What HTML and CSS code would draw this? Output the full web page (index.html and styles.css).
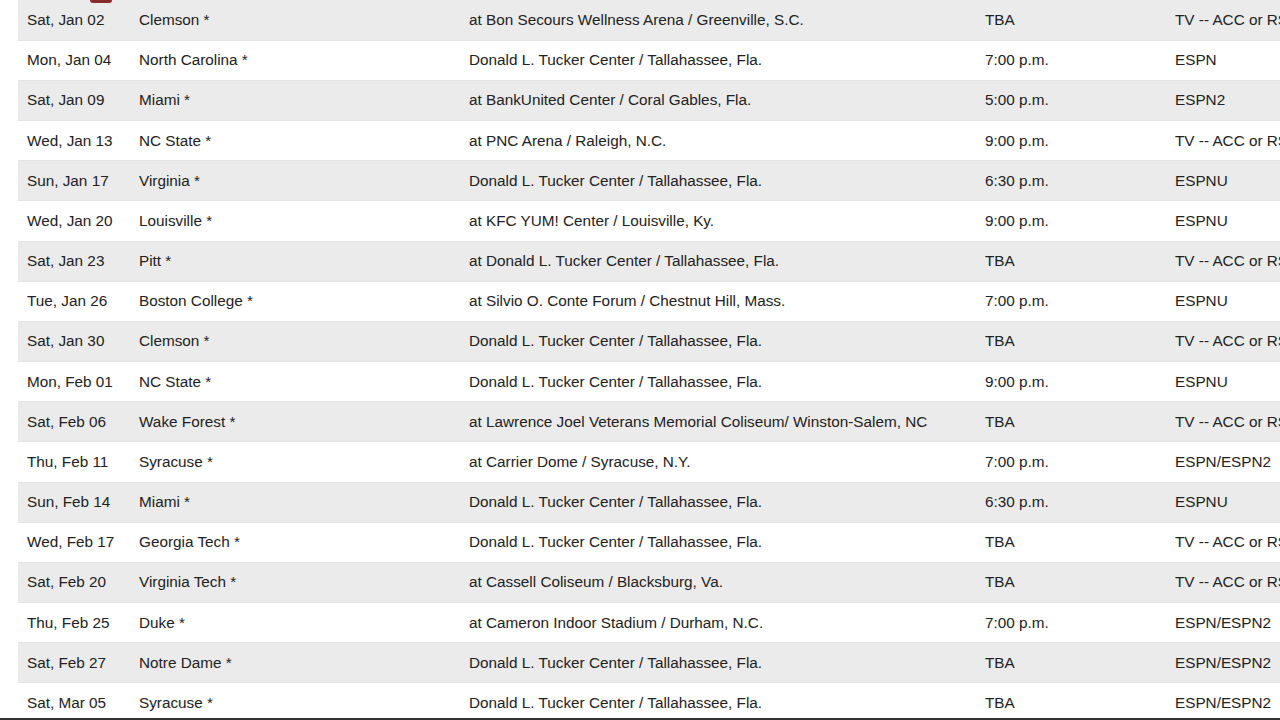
FILE: index.html
```html
<!DOCTYPE html>
<html>
<head>
<meta charset="utf-8">
<link rel="stylesheet" href="styles.css">
</head>
<body>
<div class="page">
  <div class="logo-tip"></div>
  <table class="schedule">
    <colgroup>
      <col class="c-date"><col class="c-opp"><col class="c-loc"><col class="c-time"><col class="c-tv">
    </colgroup>
    <tbody>
      <tr><td>Sat, Jan 02</td><td>Clemson *</td><td>at Bon Secours Wellness Arena / Greenville, S.C.</td><td>TBA</td><td>TV -- ACC or RSN</td></tr>
      <tr><td>Mon, Jan 04</td><td>North Carolina *</td><td>Donald L. Tucker Center / Tallahassee, Fla.</td><td>7:00 p.m.</td><td>ESPN</td></tr>
      <tr><td>Sat, Jan 09</td><td>Miami *</td><td>at BankUnited Center / Coral Gables, Fla.</td><td>5:00 p.m.</td><td>ESPN2</td></tr>
      <tr><td>Wed, Jan 13</td><td>NC State *</td><td>at PNC Arena / Raleigh, N.C.</td><td>9:00 p.m.</td><td>TV -- ACC or RSN</td></tr>
      <tr><td>Sun, Jan 17</td><td>Virginia *</td><td>Donald L. Tucker Center / Tallahassee, Fla.</td><td>6:30 p.m.</td><td>ESPNU</td></tr>
      <tr><td>Wed, Jan 20</td><td>Louisville *</td><td>at KFC YUM! Center / Louisville, Ky.</td><td>9:00 p.m.</td><td>ESPNU</td></tr>
      <tr><td>Sat, Jan 23</td><td>Pitt *</td><td>at Donald L. Tucker Center / Tallahassee, Fla.</td><td>TBA</td><td>TV -- ACC or RSN</td></tr>
      <tr><td>Tue, Jan 26</td><td>Boston College *</td><td>at Silvio O. Conte Forum / Chestnut Hill, Mass.</td><td>7:00 p.m.</td><td>ESPNU</td></tr>
      <tr><td>Sat, Jan 30</td><td>Clemson *</td><td>Donald L. Tucker Center / Tallahassee, Fla.</td><td>TBA</td><td>TV -- ACC or RSN</td></tr>
      <tr><td>Mon, Feb 01</td><td>NC State *</td><td>Donald L. Tucker Center / Tallahassee, Fla.</td><td>9:00 p.m.</td><td>ESPNU</td></tr>
      <tr><td>Sat, Feb 06</td><td>Wake Forest *</td><td>at Lawrence Joel Veterans Memorial Coliseum/ Winston-Salem, NC</td><td>TBA</td><td>TV -- ACC or RSN</td></tr>
      <tr><td>Thu, Feb 11</td><td>Syracuse *</td><td>at Carrier Dome / Syracuse, N.Y.</td><td>7:00 p.m.</td><td>ESPN/ESPN2</td></tr>
      <tr><td>Sun, Feb 14</td><td>Miami *</td><td>Donald L. Tucker Center / Tallahassee, Fla.</td><td>6:30 p.m.</td><td>ESPNU</td></tr>
      <tr><td>Wed, Feb 17</td><td>Georgia Tech *</td><td>Donald L. Tucker Center / Tallahassee, Fla.</td><td>TBA</td><td>TV -- ACC or RSN</td></tr>
      <tr><td>Sat, Feb 20</td><td>Virginia Tech *</td><td>at Cassell Coliseum / Blacksburg, Va.</td><td>TBA</td><td>TV -- ACC or RSN</td></tr>
      <tr><td>Thu, Feb 25</td><td>Duke *</td><td>at Cameron Indoor Stadium / Durham, N.C.</td><td>7:00 p.m.</td><td>ESPN/ESPN2</td></tr>
      <tr><td>Sat, Feb 27</td><td>Notre Dame *</td><td>Donald L. Tucker Center / Tallahassee, Fla.</td><td>TBA</td><td>ESPN/ESPN2</td></tr>
      <tr><td>Sat, Mar 05</td><td>Syracuse *</td><td>Donald L. Tucker Center / Tallahassee, Fla.</td><td>TBA</td><td>ESPN/ESPN2</td></tr>
    </tbody>
  </table>
</div>
<div class="bottom-bar"></div>
</body>
</html>
```
FILE: styles.css
```css
html, body {
  margin: 0;
  padding: 0;
  background: #ffffff;
  overflow: hidden;
  width: 1280px;
  height: 720px;
}
body {
  position: relative;
  font-family: "Liberation Sans", Arial, Helvetica, sans-serif;
  color: #222222;
}
.page {
  padding-left: 18px;
  position: relative;
}
.logo-tip {
  position: absolute;
  left: 90px;
  top: 0;
  width: 22px;
  height: 3px;
  background: #8a2a2a;
  border-radius: 0 0 6px 6px;
  z-index: 2;
}
.schedule {
  border-collapse: collapse;
  table-layout: fixed;
  width: 1330px;
  font-size: 15.3px;
}
.c-date { width: 112px; }
.c-opp { width: 330px; }
.c-loc { width: 516px; }
.c-time { width: 190px; }
.c-tv { width: 182px; }
.schedule td {
  height: 40.18px;
  padding: 0 0 0 9px;
  white-space: nowrap;
  overflow: hidden;
  border-bottom: 1px solid #e4e4e4;
  vertical-align: middle;
  box-sizing: border-box;
}
.schedule tr:nth-child(odd) td {
  background: #ebebeb;
}
.bottom-bar {
  position: absolute;
  left: 0;
  right: 0;
  bottom: 0;
  height: 2px;
  background: #333333;
}
```
